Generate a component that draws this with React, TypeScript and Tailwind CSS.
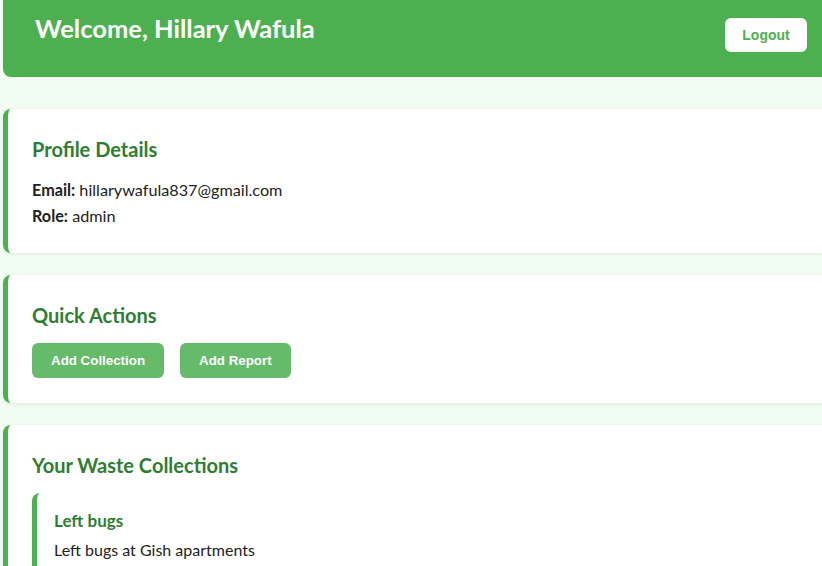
import React from 'react'

const font = { fontFamily: 'Lato, "Noto Sans", sans-serif' }
const btnFont = { fontFamily: '"Liberation Sans", Arial, sans-serif' }

function Card({ title, children, className = '' }: { title: string; children: React.ReactNode; className?: string }) {
  return (
    <section className={`bg-white rounded-lg border-l-[5px] border-[#4caf50] shadow-[0_1px_4px_rgba(0,0,0,0.08)] px-6 pt-[26px] ${className}`}>
      <h3 className="text-[20px] leading-[28px] font-bold text-[#2e7d32] mb-[14px]">{title}</h3>
      {children}
    </section>
  )
}

export default function App() {
  return (
    <div className="w-[822px] h-[566px] overflow-hidden bg-[#f2fdf2] text-[#222]" style={font}>
      <div className="w-[900px] pl-[3px]">
        <header className="bg-[#4caf50] rounded-b-lg h-[77px] flex justify-between items-start pl-8 pr-[93px]">
          <h2 className="text-white text-[25.5px] leading-8 font-bold pt-[12px]">Welcome, Hillary Wafula</h2>
          <button className="mt-[18px] bg-white text-[#4caf50] rounded-md h-[34px] w-[82px] text-[14px] font-bold" style={btnFont}>
            Logout
          </button>
        </header>

        <div className="flex flex-col gap-[22px] mt-8">
          <Card title="Profile Details" className="pb-6">
            <p className="text-[16.2px] leading-[26px]"><strong>Email:</strong> hillarywafula837@gmail.com</p>
            <p className="text-[16.2px] leading-[26px]"><strong>Role:</strong> admin</p>
          </Card>

          <Card title="Quick Actions" className="pb-[25px]">
            <div className="flex gap-4 mt-1">
              <button className="bg-[#66bb6a] text-white rounded-md h-[35px] px-[19px] text-[13.33px] font-bold" style={btnFont}>
                Add Collection
              </button>
              <button className="bg-[#66bb6a] text-white rounded-md h-[35px] px-[19px] text-[13.33px] font-bold" style={btnFont}>
                Add Report
              </button>
            </div>
          </Card>

          <Card title="Your Waste Collections" className="pb-6">
            <div className="bg-white rounded-lg border-l-[5px] border-[#4caf50] pl-[17px] pt-4 pb-4">
              <h4 className="text-[17px] leading-6 font-bold text-[#2e7d32] mb-[5px]">Left bugs</h4>
              <p className="text-[16px] leading-6">Left bugs at Gish apartments</p>
            </div>
          </Card>
        </div>
      </div>
    </div>
  )
}
